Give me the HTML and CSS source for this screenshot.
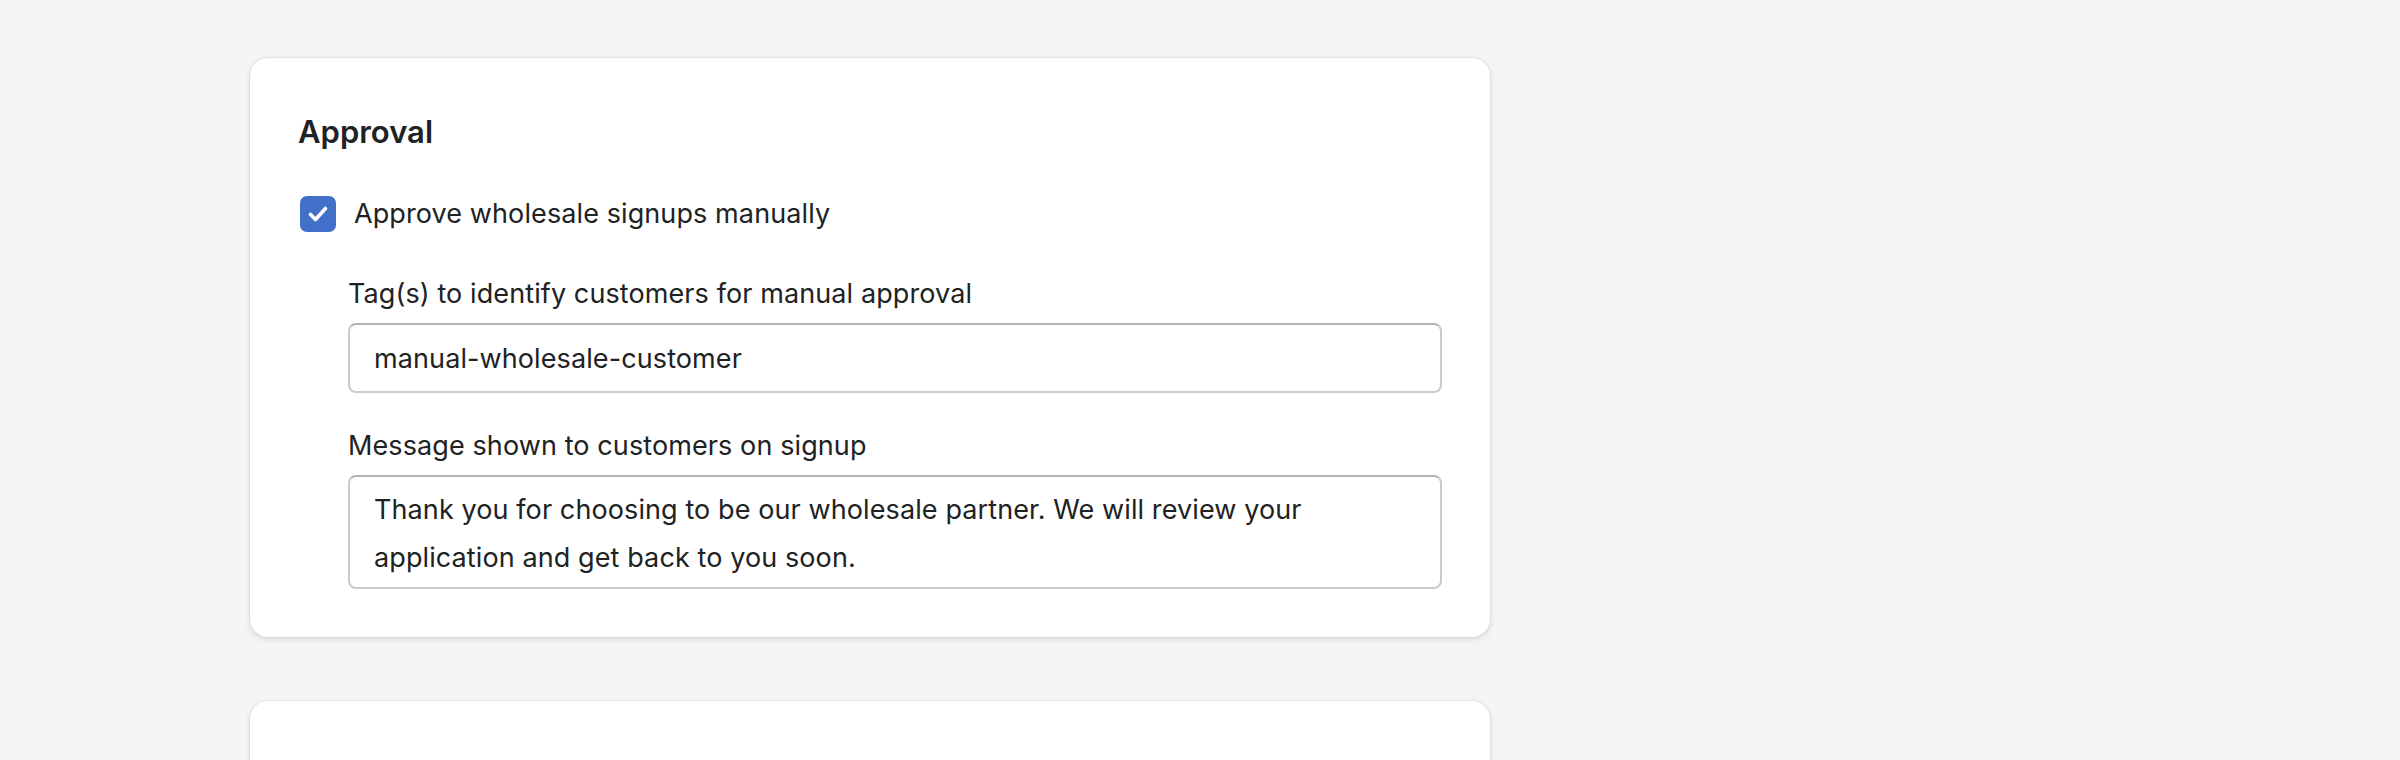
FILE: index.html
```html
<!DOCTYPE html>
<html>
  <head>
    <meta charset="utf-8" />
    <title>Wholesale settings</title>
    <link rel="stylesheet" href="styles.css">
  </head>
  <body>
    <div class="page">
      <section class="card">
        <h2 class="card-title">Approval</h2>

        <label class="checkbox-row">
          <span class="checkbox">
            <svg width="36" height="36" viewBox="0 0 36 36">
              <path d="M10.5 18.5 L15.5 23.5 L25.5 12.5" fill="none" stroke="#fff" stroke-width="3.6" stroke-linecap="round" stroke-linejoin="round" />
            </svg>
          </span>
          <span class="checkbox-label">Approve wholesale signups manually</span>
        </label>

        <div class="sub-fields">
          <div class="field">
            <label class="field-label" for="approval-tags">Tag(s) to identify customers for manual approval</label>
            <input id="approval-tags" class="text-input" type="text" value="manual-wholesale-customer">
          </div>

          <div class="field">
            <label class="field-label" for="signup-message">Message shown to customers on signup</label>
            <textarea id="signup-message" class="text-area">Thank you for choosing to be our wholesale partner. We will review your application and get back to you soon.</textarea>
          </div>
        </div>
      </section>

      <section class="card card-next"></section>
    </div>
  </body>
</html>
```
FILE: styles.css
```css
body {
  margin: 0;
  background-color: #f5f5f5;
  font-family: Inter, "Noto Sans", sans-serif;
  color: #202223;
}

.page {
  padding: 58px 0 0 250px;
}

.card {
  width: 1240px;
  box-sizing: border-box;
  padding: 48px;
  background-color: #fff;
  border-radius: 18px;
  box-shadow: 0 0 0 1px rgba(63, 63, 68, 0.05), 0 2px 6px rgba(63, 63, 68, 0.16);
}

.card-next {
  margin-top: 64px;
  height: 200px;
}

.card-title {
  margin: 0 0 36px;
  font-size: 31px;
  line-height: 52px;
  font-weight: 600;
}

/* checkbox */
.checkbox-row {
  display: flex;
  align-items: center;
  gap: 18px;
  height: 40px;
  font-size: 27px;
  line-height: 40px;
  letter-spacing: 0.1px;
}

.checkbox {
  display: flex;
  width: 36px;
  height: 36px;
  margin-left: 2px;
  border-radius: 7px;
  background-color: #4270c9;
}

/* indented fields */
.sub-fields {
  margin: 40px 0 0 50px;
}

.field + .field {
  margin-top: 33px;
}

.field-label {
  display: block;
  margin-bottom: 9px;
  font-size: 27px;
  line-height: 40px;
  letter-spacing: 0.1px;
}

.text-input,
.text-area {
  display: block;
  width: 100%;
  box-sizing: border-box;
  margin: 0;
  font-family: inherit;
  font-size: 27px;
  letter-spacing: 0.1px;
  color: #202223;
  background-color: #fff;
  border: 2px solid #c9cccf;
  border-top-color: #aeb4b9;
  border-radius: 8px;
  outline: none;
}

.text-input {
  height: 70px;
  padding: 0 24px;
  line-height: 48px;
}

.text-area {
  height: 114px;
  padding: 9px 24px 0;
  line-height: 48px;
  resize: none;
  overflow: hidden;
}
```
